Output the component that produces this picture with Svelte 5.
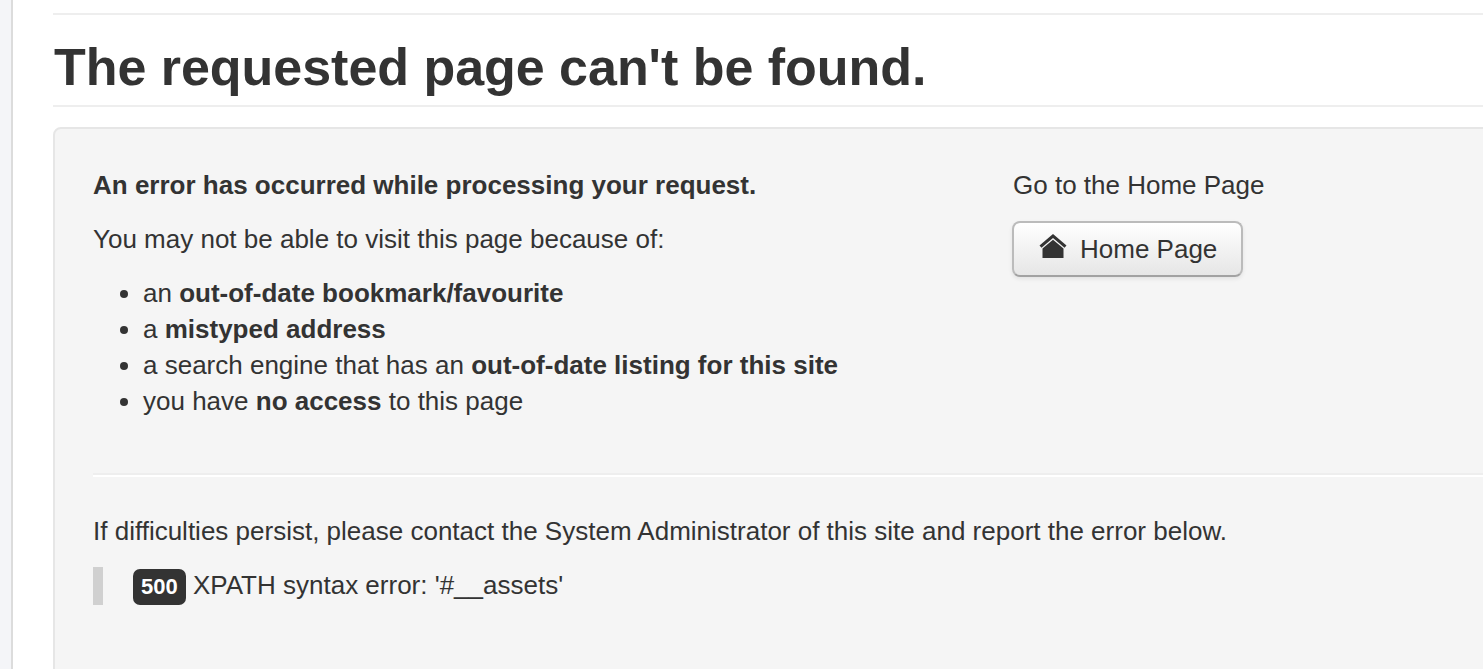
<script lang="ts">
  const reasons = [
    { before: 'an ', strong: 'out-of-date bookmark/favourite', after: '' },
    { before: 'a ', strong: 'mistyped address', after: '' },
    { before: 'a search engine that has an ', strong: 'out-of-date listing for this site', after: '' },
    { before: 'you have ', strong: 'no access', after: ' to this page' }
  ];
</script>

<div class="page">
  <div class="content">
    <header class="header">
      <h1>The requested page can't be found.</h1>
    </header>
    <div class="well">
      <div class="row">
        <div class="left">
          <p><strong>An error has occurred while processing your request.</strong></p>
          <p>You may not be able to visit this page because of:</p>
          <ul>
            {#each reasons as r}
              <li>{r.before}<strong>{r.strong}</strong>{r.after}</li>
            {/each}
          </ul>
        </div>
        <div class="right">
          <p>Go to the Home Page</p>
          <div class="button">
            <svg viewBox="0 0 28 26" width="28" height="26">
              <path d="M14 1 L0.5 12.5 L2.5 14.8 L14 5 L25.5 14.8 L27.5 12.5 Z M14 6.8 L3.5 15.5 V25 H24.5 V15.5 Z" fill="#333" />
            </svg>
            <span>Home Page</span>
          </div>
        </div>
      </div>
      <hr />
      <p>If difficulties persist, please contact the System Administrator of this site and report the error below.</p>
      <blockquote>
        <span class="badge">500</span> XPATH syntax error: '#__assets'
      </blockquote>
    </div>
  </div>
</div>

<style>
  :global(html), :global(#app) {
    background: #f4f5f8;
  }
  :global(body) {
    margin: 0;
    overflow: hidden;
  }
  .page {
    height: 669px;
    box-sizing: border-box;
    overflow: hidden;
    background: #fff;
    border-left: 2px solid #dcdcdc;
    margin-left: 11px;
    padding: 13px 0 0 40px;
    font-family: "Liberation Sans", Arial, sans-serif;
    font-size: 26px;
    line-height: 36px;
    color: #333;
  }
  .content {
    width: 1500px;
  }
  .header {
    border-top: 2px solid #eee;
    border-bottom: 2px solid #eee;
    height: 90px;
    margin-bottom: 20px;
  }
  h1 {
    margin: 0;
    padding: 25px 0 0 1px;
    font-size: 52px;
    line-height: 54px;
    font-weight: bold;
    letter-spacing: -0.03px;
    color: #333;
  }
  .well {
    background: #f5f5f5;
    border: 2px solid #e6e6e6;
    border-radius: 8px;
    padding: 38px;
    height: 640px;
    box-sizing: border-box;
  }
  .row {
    display: flex;
  }
  .left {
    width: 920px;
  }
  p {
    margin: 0 0 18px;
  }
  ul {
    margin: 0 0 18px;
    padding: 0 0 0 50px;
  }
  .button {
    display: inline-flex;
    align-items: center;
    gap: 13px;
    box-sizing: border-box;
    width: 231px;
    height: 56px;
    margin-left: -1px;
    padding-left: 25px;
    border: 2px solid #bbb;
    border-bottom-color: #a2a2a2;
    border-radius: 8px;
    background: linear-gradient(#fff, #e6e6e6);
    box-shadow: 0 2px 4px rgba(0, 0, 0, 0.08);
  }
  .button svg {
    margin-top: -6px;
  }
  hr {
    border: 0;
    border-top: 2px solid #eee;
    border-bottom: 2px solid #fff;
    margin: 36px 0;
  }
  blockquote {
    margin: 0;
    border-left: 10px solid #d0d0d0;
    padding-left: 30px;
    height: 38px;
    line-height: 36px;
  }
  .badge {
    display: inline-block;
    background: #333;
    color: #fff;
    font-weight: bold;
    font-size: 22px;
    line-height: 35px;
    padding: 0 8px 1px;
    border-radius: 7px;
  }
</style>
